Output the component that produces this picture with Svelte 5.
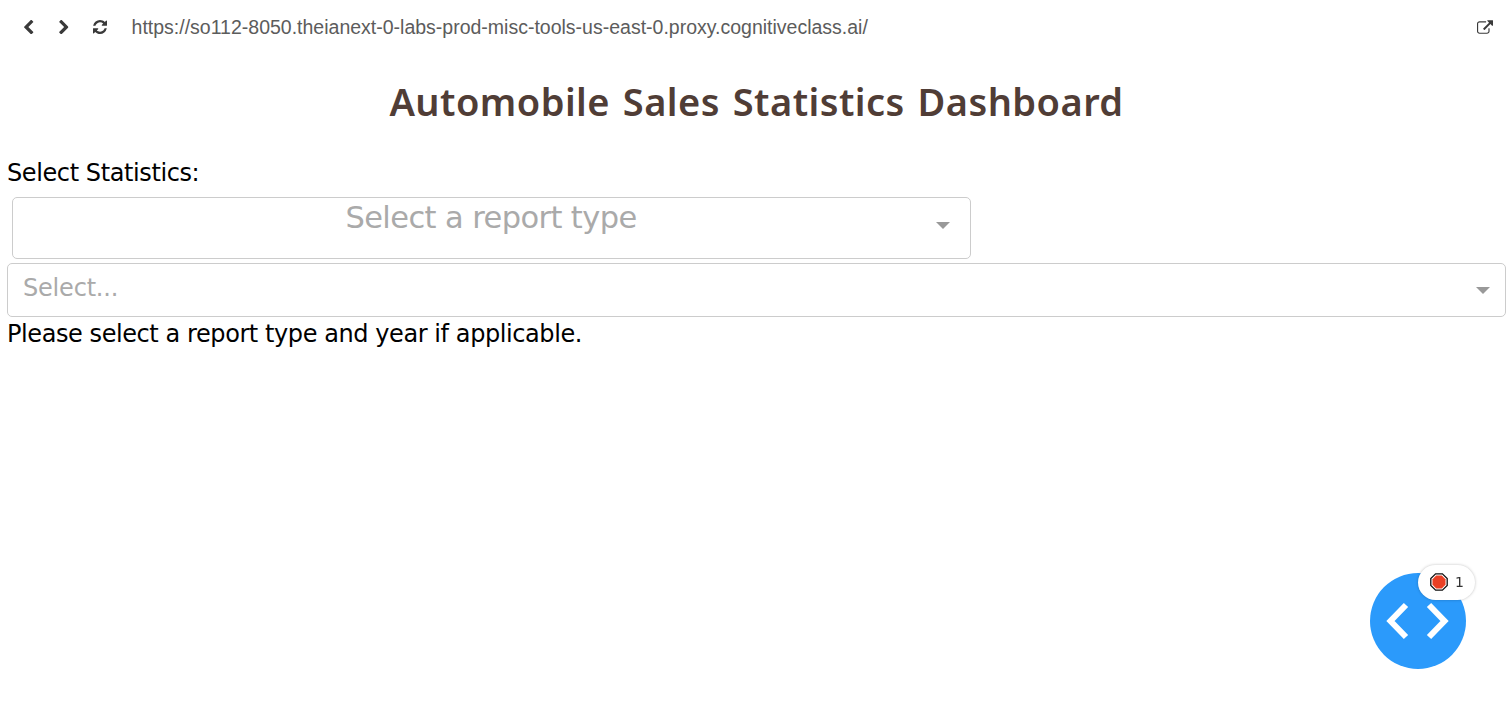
<script>
  const url = 'https://so112-8050.theianext-0-labs-prod-misc-tools-us-east-0.proxy.cognitiveclass.ai/';
  const chevron = 'M1427 301l-531 531 531 531q19 19 19 45t-19 45l-166 166q-19 19-45 19t-45-19l-742-742q-19-19-19-45t19-45l742-742q19-19 45-19t45 19l166 166q19 19 19 45t-19 45z';
  const refresh = 'M1639 1056q0 5-1 7-64 268-268 434.500t-478 166.500q-146 0-282.500-55t-243.500-157l-129 129q-19 19-45 19t-45-19-19-45v-448q0-26 19-45t45-19h448q26 0 45 19t19 45-19 45l-137 137q71 66 161 102t187 36q134 0 250-65t186-179q11-17 53-117 8-23 30-23h192q13 0 22.500 9.500t9.500 22.500zm25-800v448q0 26-19 45t-45 19h-448q-26 0-45-19t-19-45 19-45l138-138q-148-137-349-137-134 0-250 65t-186 179q-11 17-53 117-8 23-30 23h-199q-13 0-22.500-9.500t-9.500-22.500v-7q65-268 270-434.500t480-166.500q146 0 284 55.500t245 156.500l130-129q19-19 45-19t45 19 19 45z';
  const external = 'M1408 928v320q0 119-84.500 203.500t-203.500 84.500h-832q-119 0-203.500-84.500t-84.500-203.500v-832q0-119 84.500-203.500t203.500-84.500h704q14 0 23 9t9 23v64q0 14-9 23t-23 9h-704q-66 0-113 47t-47 113v832q0 66 47 113t113 47h832q66 0 113-47t47-113v-320q0-14 9-23t23-9h64q14 0 23 9t9 23zm384-864v512q0 26-19 45t-45 19-45-19l-176-176-652 652q-10 10-23 10t-23-10l-114-114q-10-10-10-23t10-23l652-652-176-176q-19-19-19-45t19-45 45-19h512q26 0 45 19t19 45z';
</script>

<header>
  <nav>
    <svg viewBox="410 40 1060 1584" width="9.500" height="14.200"><path d={chevron} /></svg>
    <svg class="next" viewBox="410 40 1060 1584" width="9.500" height="14.200"><path d={chevron} /></svg>
    <svg class="refresh" viewBox="128 128 1536 1536" width="14" height="14"><path d={refresh} /></svg>
  </nav>
  <span class="url">{url}</span>
  <svg class="open" viewBox="0 0 1792 1536" width="16" height="14"><path d={external} /></svg>
</header>

<main>
  <h1>Automobile Sales Statistics Dashboard</h1>
  <div class="label">Select Statistics:</div>
  <div class="select report">
    <span>Select a report type</span>
    <i></i>
  </div>
  <div class="select year">
    <span>Select...</span>
    <i></i>
  </div>
  <div class="message">Please select a report type and year if applicable.</div>
</main>

<div class="debug">
  <svg viewBox="0 0 96 96" width="96" height="96">
    <circle cx="48" cy="48" r="48" />
    <path d="M36 32L20.500 48L36 64M59 32L74.500 48L59 64" />
  </svg>
  <div class="errors">
    <svg viewBox="0 0 18 18" width="18" height="18">
      <path d="M5.600 .800h6.800l4.800 4.800v6.800l-4.800 4.800h-6.800l-4.800-4.800v-6.800z" fill="#fff" stroke="#111" stroke-width="1.300" />
      <path d="M6.200 2.500h5.600l3.700 3.700v5.600l-3.700 3.700h-5.600l-3.700-3.700v-5.600z" fill="#ea4025" />
    </svg>
    <span>1</span>
  </div>
</div>

<style>
  :global(body) {
    background: #fff;
    font-family: 'DejaVu Sans', Verdana, sans-serif;
  }
  header {
    display: flex;
    align-items: center;
    height: 54px;
    padding: 0 15px 0 24px;
    box-sizing: border-box;
    fill: #3a3a3a;
  }
  header svg { display: block; flex: none; }
  nav { display: flex; align-items: center; }
  .next { transform: scaleX(-1); margin-left: 25.500px; }
  .refresh { margin-left: 24.500px; }
  .url {
    flex: 1;
    margin-left: 24.600px;
    font: 19.500px/24px 'Liberation Sans', Arial, sans-serif;
    color: #5c5c5c;
  }
  .open { margin-top: -1px; }
  main { padding: 0 2px 0 7px; }
  h1 {
    height: 50px;
    margin: 22px 0 0;
    text-align: center;
    font: 600 38px/50px 'Noto Sans', sans-serif;
    letter-spacing: .45px;
    word-spacing: 2.500px;
    color: #503d36;
    white-space: nowrap;
  }
  .label, .message { font-size: 24px; line-height: 32px; color: #000; }
  .label { margin-top: 31px; letter-spacing: -.4px; }
  .message { margin-top: 1px; letter-spacing: -.42px; }
  .select {
    display: flex;
    align-items: center;
    box-sizing: border-box;
    border: 1px solid #ccc;
    border-radius: 5px;
    color: #aaa;
  }
  .select span { flex: 1; }
  .select i {
    border: 7px solid transparent;
    border-top-color: #999;
    border-bottom: 0;
  }
  .report {
    width: 959px;
    height: 62px;
    margin: 8px 0 4px 5px;
    padding-right: 20px;
    font-size: 30.500px;
    text-align: center;
    letter-spacing: -.6px;
  }
  .report span { line-height: 40px; height: 60px; padding-left: 33px; }
  .report i { margin-top: -5px; }
  .year { height: 54px; padding: 0 15px; font-size: 24px; letter-spacing: -.2px; }
  .year span { line-height: 49px; height: 52px; }
  .debug { position: fixed; left: 1370px; top: 573px; }
  .debug svg { display: block; }
  .debug circle { fill: #2b9afb; }
  .debug > svg path { fill: none; stroke: #fff; stroke-width: 6; }
  .errors {
    position: absolute;
    left: 48px;
    top: -8px;
    width: 57px;
    height: 35px;
    box-sizing: border-box;
    padding: 0 0 2px 12px;
    display: flex;
    align-items: center;
    gap: 7px;
    border-radius: 18px;
    background: #fff;
    box-shadow: 0 0 3px rgba(0, 0, 0, .25);
    font-size: 14px;
    color: #333;
  }
</style>
